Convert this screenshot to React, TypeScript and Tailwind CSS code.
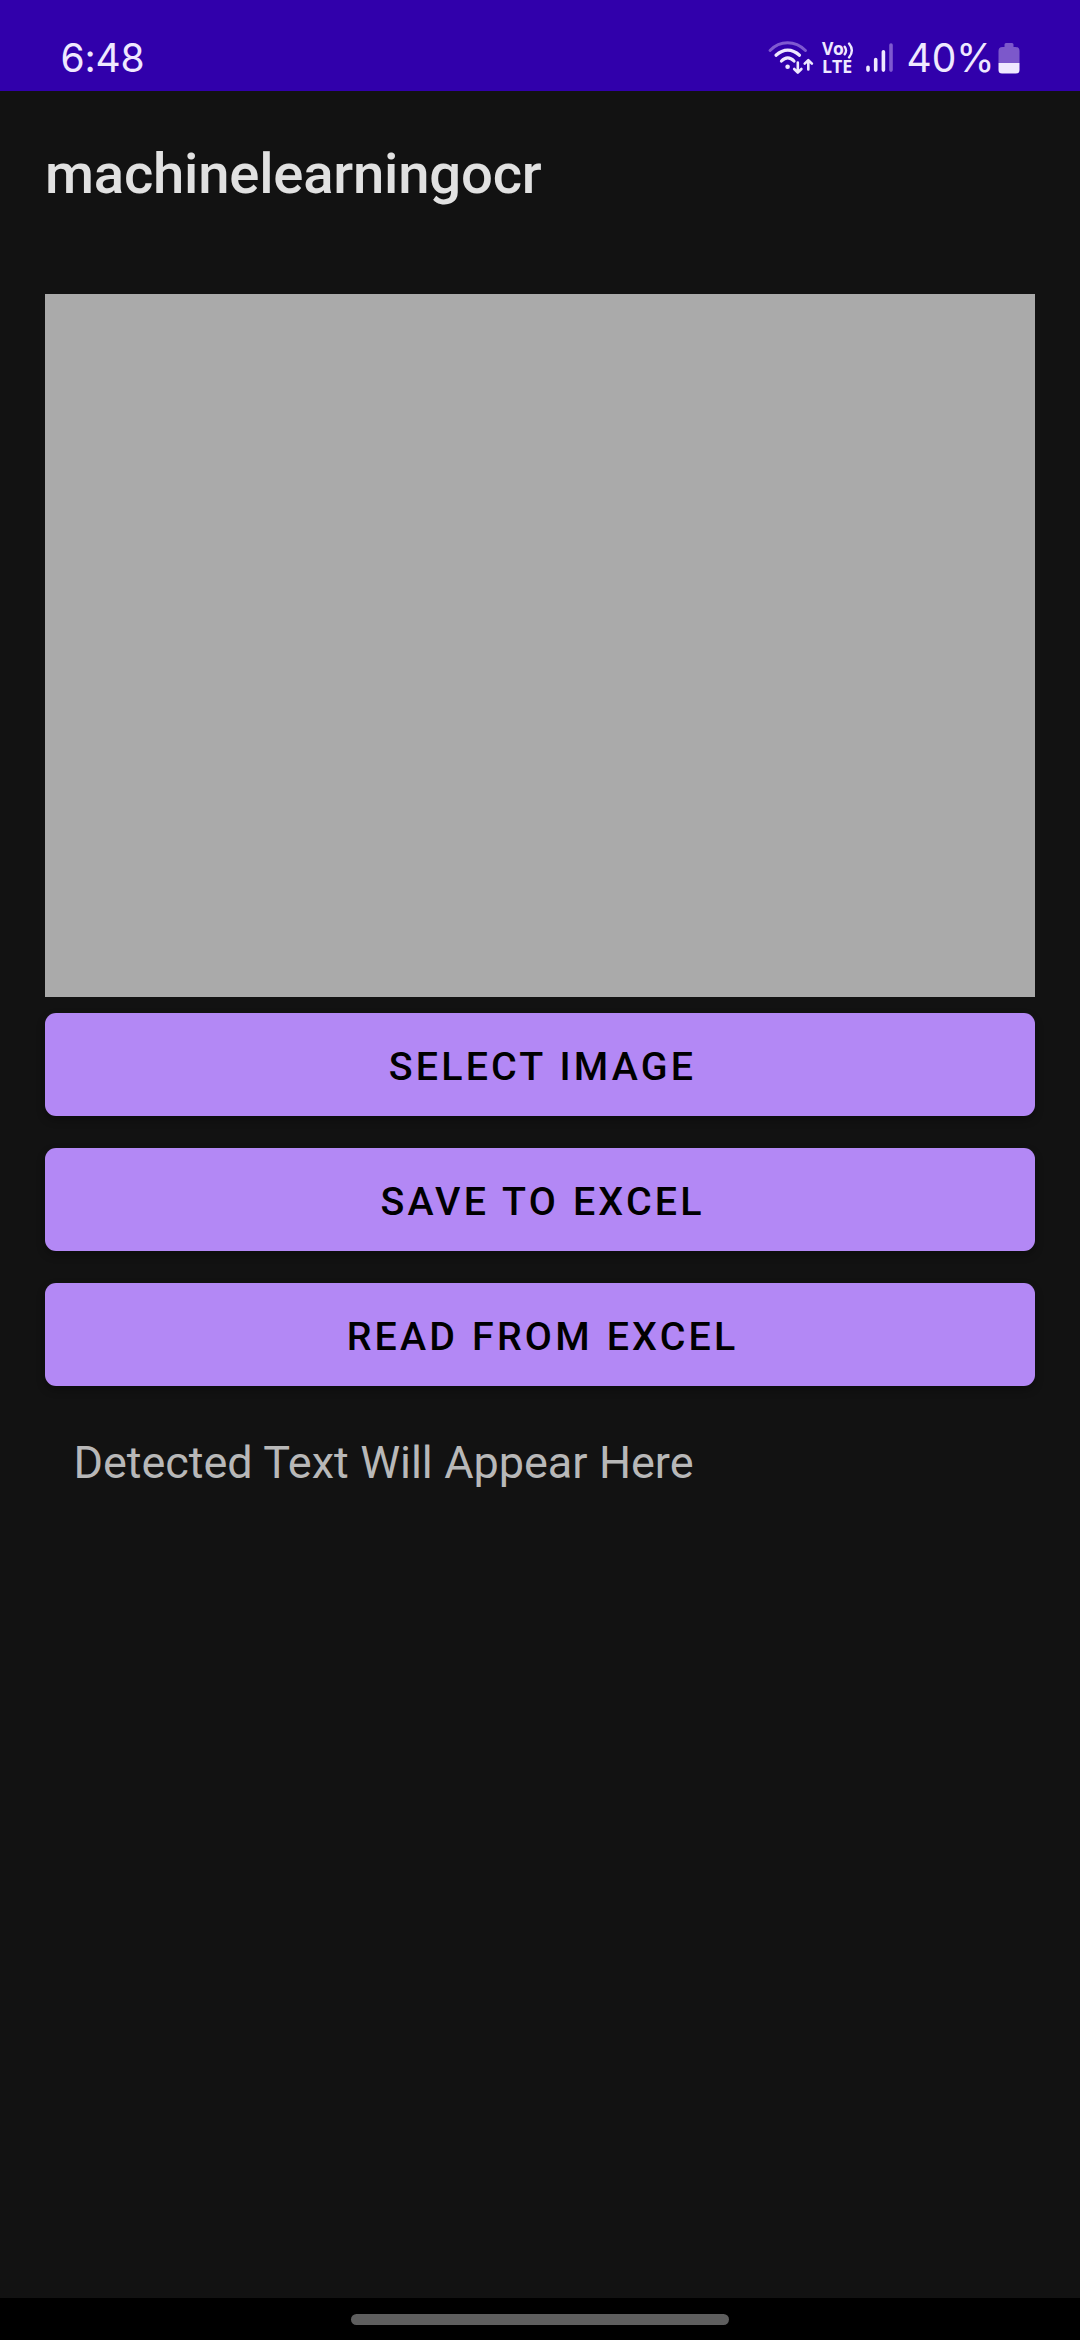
const actions = ['SELECT IMAGE', 'SAVE TO EXCEL', 'READ FROM EXCEL'];

function WifiIcon() {
  return (
    <svg className="h-[36px] w-[47px] shrink-0" viewBox="767 40 47 36" fill="none" stroke="#efe8ff" strokeLinecap="round">
      <path d="M770 50.5C780 40.2 795 40.2 805.5 50.5" strokeWidth="2.9" stroke="#7f59d0" />
      <path d="M776 55.3C783.5 48.5 792 48.5 799.5 55.3" strokeWidth="3.2" />
      <path d="M781.5 61C785.5 56.8 790 56.8 794 61" strokeWidth="3.2" />
      <circle cx="787.6" cy="66.7" r="2.3" fill="#efe8ff" stroke="none" />
      <path d="M797.8 62.5V72M794.2 69L797.8 72.6L801.4 69" strokeWidth="2.6" strokeLinejoin="round" />
      <path d="M808.3 69.5V60.5M804.7 63.7L808.3 60.1L811.9 63.7" strokeWidth="2.6" strokeLinejoin="round" />
    </svg>
  );
}

function VolteIcon() {
  return (
    <div className="ml-[8px] flex h-[36px] w-[33px] shrink-0 flex-col font-['Open_Sans',sans-serif] font-bold text-[#efe8ff]">
      <div className="flex h-[17px] items-start">
        <span className="w-[21px] text-[17.5px] leading-[17px] tracking-[-0.3px]">Vo</span>
        <svg className="mt-[2px] h-[17px] w-[11px]" viewBox="0 0 10 16" fill="none" stroke="#efe8ff" strokeWidth="2.2" strokeLinecap="round">
          <path d="M1.4 4.5Q4 8 1.4 11.5M5.5 1.5Q10.8 8 5.5 14.5" />
        </svg>
      </div>
      <span className="pt-px text-[17.8px] leading-[17px]">LTE</span>
    </div>
  );
}

function SignalIcon() {
  return (
    <svg className="ml-[11px] mt-px h-[32px] w-[28px] shrink-0" viewBox="866 41 28 32" strokeWidth="3.6" strokeLinecap="round" stroke="#efe8ff">
      <path d="M868 67.3V70.1M875.7 59.5V70.1M883.4 51.7V70.1" />
      <path d="M891 45V70.1" stroke="#7f59d0" />
    </svg>
  );
}

function BatteryIcon() {
  return (
    <svg className="ml-auto mt-[2px] h-[32px] w-[22px] shrink-0" viewBox="997.5 42 22 32">
      <path d="M1004 47V44.5Q1004 43 1005.5 43H1011.5Q1013 43 1013 44.5V47H1015Q1019 47 1019 51V63H998V51Q998 47 1002 47Z" fill="#7c58cb" />
      <path d="M998 63H1019V70Q1019 73.5 1015.5 73.5H1001.5Q998 73.5 998 70Z" fill="#efe8ff" />
    </svg>
  );
}

function StatusBar() {
  return (
    <header className="flex h-[91px] shrink-0 items-start justify-between bg-[#3100ab] pl-[60.5px] pr-[60px] pt-[40px] font-['Inter',sans-serif] text-[39px] leading-[36px] text-[#efe8ff]">
      <span className="tracking-[-0.2px]">6:48</span>
      <div className="flex w-[253px] items-start">
        <WifiIcon />
        <VolteIcon />
        <SignalIcon />
        <span className="ml-[12.5px] w-[88px] whitespace-nowrap">40%</span>
        <BatteryIcon />
      </div>
    </header>
  );
}

export default function App() {
  return (
    <div className="flex h-[2340px] w-[1080px] flex-col overflow-hidden bg-[#121212] font-['Roboto',sans-serif]">
      <StatusBar />
      <h1 className="flex h-[158px] shrink-0 items-center px-[45px] pt-[7px] text-[56.25px] font-medium leading-[66px] tracking-[-0.22px] text-[#e1e1e1]">
        machinelearningocr
      </h1>
      <main className="flex grow flex-col px-[45px] pt-[45px]">
        <div className="h-[703px] shrink-0 bg-[#aaaaaa]" />
        <div className="mt-4 flex flex-col gap-8">
          {actions.map((label) => (
            <button
              key={label}
              className="h-[103px] rounded-[11px] bg-[#b388f5] pl-[5px] pt-[4px] text-[39.375px] font-medium leading-[46px] tracking-[3.17px] text-black shadow-[0_4px_8px_rgba(0,0,0,0.3)] [word-spacing:1px]"
            >
              {label}
            </button>
          ))}
        </div>
        <p className="mt-[50px] pl-[28.5px] text-[45px] leading-[53px] tracking-[-0.06px] text-[#b8b8b8] [word-spacing:0.5px]">
          Detected Text Will Appear Here
        </p>
      </main>
      <footer className="flex h-[42px] shrink-0 justify-center bg-black pt-4">
        <div className="h-[11px] w-[378px] rounded-full bg-[#5e5e5e]" />
      </footer>
    </div>
  );
}
